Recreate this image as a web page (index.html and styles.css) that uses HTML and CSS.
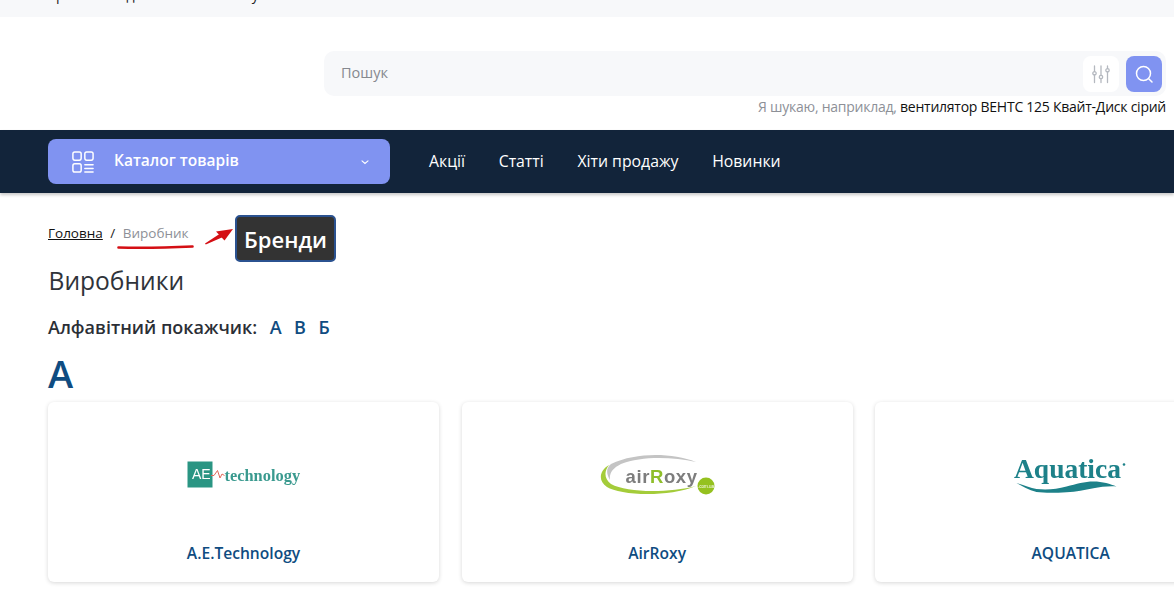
FILE: index.html
```html
<!DOCTYPE html>
<html lang="uk">
<head>
<meta charset="utf-8">
<title>Виробники</title>
<link rel="stylesheet" href="styles.css">
</head>
<body>
<div class="topbar">
  <div class="topbar-inner">
    <span class="top-a">р</span><span class="top-b">д</span><span class="top-c">у</span>
  </div>
</div>
<header class="header">
  <div class="search-col">
    <div class="search">
      <span class="search-label">Пошук</span>
      <span class="icon-btn icon-btn-light">
        <svg width="20" height="20" viewBox="0 0 20 20" fill="none" stroke="#b4b8bf" stroke-width="1.3" stroke-linecap="round">
          <path d="M3.5 2v5.600M3.5 11v7.500M10 2v9.300M10 14.700v3.800M16.500 2v2.600M16.500 8v10.500"/>
          <circle cx="3.500" cy="9.300" r="1.700"/><circle cx="10" cy="13" r="1.700"/><circle cx="16.500" cy="6.300" r="1.700"/>
        </svg>
      </span>
      <span class="icon-btn icon-btn-blue">
        <svg width="20" height="20" viewBox="0 0 20 20" fill="none" stroke="#fff" stroke-width="1.500" stroke-linecap="round">
          <circle cx="9.500" cy="9.500" r="7"/><path d="M14.700 14.700l3.300 3.300"/>
        </svg>
      </span>
    </div>
    <p class="hint">Я шукаю, наприклад, <span class="hint-dark">вентилятор ВЕНТС 125 Квайт-Диск сірий</span></p>
  </div>
</header>
<nav class="nav">
  <div class="catalog">
    <svg class="catalog-icon" width="22" height="22" viewBox="0 0 24 24" fill="none" stroke="#fff" stroke-width="1.600" stroke-linecap="round">
      <rect x="1" y="1" width="9" height="9" rx="2"/><rect x="14" y="1" width="9" height="9" rx="2"/><rect x="1" y="14" width="9" height="9" rx="2"/>
      <path d="M14 15h9M14 19h9M14 23h9"/>
    </svg>
    <span class="catalog-label">Каталог товарів</span>
    <svg class="catalog-chevron" width="10" height="10" viewBox="0 0 10 10" fill="none" stroke="#fff" stroke-width="1.100" stroke-linecap="round"><path d="M2 3.800l3 2.700 3-2.700"/></svg>
  </div>
  <a class="nav-link">Акції</a>
  <a class="nav-link">Статті</a>
  <a class="nav-link">Хіти продажу</a>
  <a class="nav-link">Новинки</a>
</nav>
<main class="main">
  <div class="crumbs">
    <a class="crumb-link">Головна</a><span class="crumb-sep">/</span><span class="crumb-current">Виробник</span>
    <span class="brand-note">Бренди</span>
    <svg class="annotation" width="130" height="32" viewBox="0 0 130 32" fill="none">
      <path d="M1.500 26.500C25 27 52 26.500 75.500 25.500" stroke="#d40f14" stroke-width="2.600" stroke-linecap="round"/>
      <path d="M88 22.500L88.800 23.500L106 16L104 12Z" fill="#d40f14"/>
      <path d="M116 8L99 10.500L107.500 19.500Z" fill="#d40f14"/>
    </svg>
  </div>
  <h1 class="title">Виробники</h1>
  <div class="alpha">
    <span class="alpha-label">Алфавітний покажчик:</span>
    <a class="alpha-link">А</a><a class="alpha-link">В</a><a class="alpha-link">Б</a>
  </div>
  <h2 class="letter">А</h2>
  <div class="cards">
    <article class="card">
      <div class="card-logo">
        <svg class="logo" width="120" height="36" viewBox="1 0 120 36">
          <rect x="4.500" y="4.500" width="25" height="26" fill="#2a9583"/>
          <text x="9" y="22" class="logo-ae">AE</text>
          <path d="M28 18.500h3l3.500-5 2.500 7.500 2-4 2.500 1.500" fill="none" stroke="#e0685a" stroke-width="1"/>
          <text x="41.500" y="24" class="logo-tech">technology</text>
        </svg>
      </div>
      <div class="card-name">A.E.Technology</div>
    </article>
    <article class="card">
      <div class="card-logo">
        <svg class="logo" width="120" height="44" viewBox="0 0 120 44">
          <path d="M99 9C75 0 40 -1 14 11C8 16 10 22 13 27C12 20 16 15 24 11C45 3 75 4 99 9Z" fill="#c4c4c4"/>
          <path d="M12 12C2 18 1 28 10 34C22 42 70 45 99 33C72 40 30 40 14 31C7 26 7 18 12 12Z" fill="#a4cc3a"/>
          <text x="28.500" y="29.500" class="logo-air">air<tspan class="logo-air-r">R</tspan>oxy</text>
          <circle cx="109" cy="33" r="8.500" fill="#95c11f"/>
          <text x="109" y="34.500" class="logo-dot">.com.ua</text>
        </svg>
      </div>
      <div class="card-name">AirRoxy</div>
    </article>
    <article class="card">
      <div class="card-logo">
        <svg class="logo" width="120" height="44" viewBox="0.500 -1 120 44">
          <text x="3.500" y="23.500" class="logo-aq">Aquatica</text>
          <circle cx="113.500" cy="10.500" r="1.300" fill="#1d8189"/>
          <path d="M6 29C14 31 20 34 26 35C38 36 46 35 56 32.500C66 30 74 27.500 83 27.500C92 27.500 100 30 106 32.500C98 32 90 33 83 34.200C74 36 66 38 56 38.200C44 39 34 39 26 38C18 36 12 32 6 29Z" fill="#1d8189"/>
        </svg>
      </div>
      <div class="card-name">AQUATICA</div>
    </article>
  </div>
</main>
</body>
</html>
```

FILE: styles.css
```css
* { box-sizing: border-box; }
html, body { margin: 0; padding: 0; height: 589px; overflow: hidden; background: #fff; }
body { font-family: "Open Sans", "Liberation Sans", sans-serif; color: #2b2f36; }

.topbar { height: 17px; background: #f7f8fa; overflow: hidden; }
.topbar-inner { display: flex; margin-top: -15px; font-size: 14px; line-height: 19px; color: #222; }
.top-a { margin-left: 56px; }
.top-b { margin-left: 62px; }
.top-c { margin-left: 117px; }

.header { height: 113px; padding: 34px 8px 0 324px; }
.search-col { display: flex; flex-direction: column; align-items: stretch; }
.search { display: flex; align-items: center; gap: 7px; height: 45px; padding: 0 4px 0 17px; background: #f7f8fa; border-radius: 10px; }
.search-label { flex: 1; font-size: 14.500px; line-height: 20px; padding-bottom: 2px; color: #86898f; }
.icon-btn { width: 36px; height: 36px; border-radius: 8px; display: flex; align-items: center; justify-content: center; }
.icon-btn-light { background: #fff; }
.icon-btn-blue { background: #8093f1; }
.hint { margin: 1px 0 0; text-align: right; font-size: 14px; line-height: 19px; color: #8d9097; letter-spacing: -0.25px; white-space: nowrap; }
.hint-dark { color: #111; }

.nav { height: 63px; background: #12243a; display: flex; align-items: center; gap: 33.700px; padding: 0 48px; box-shadow: 0 2px 3px rgba(0, 0, 0, 0.22); position: relative; }
.catalog { width: 342px; height: 45px; margin-right: 5.300px; background: #8093f1; border-radius: 8px; display: flex; align-items: center; padding: 0 20px 0 24px; color: #fff; }
.catalog-icon { flex: none; }
.catalog-label { flex: 1; margin-left: 20px; padding-bottom: 3px; font-size: 15.500px; line-height: 20px; font-weight: 600; }
.catalog-chevron { flex: none; }
.nav-link { font-size: 15.800px; line-height: 22px; padding-bottom: 2px; color: #fff; white-space: nowrap; }

.main { padding: 22px 0 0 48px; }
.crumbs { position: relative; height: 47px; display: flex; align-items: flex-start; font-size: 13.500px; line-height: 19px; padding-top: 9px; }
.crumb-link { color: #111; text-decoration: underline; }
.crumb-sep { margin: 0 7.500px; color: #222; }
.crumb-current { color: #8d9097; }
.brand-note { position: absolute; left: 187px; top: 0; width: 101px; height: 47px; padding-top: 1px; display: flex; align-items: center; justify-content: center; background: #333; border: 2px solid #2b5290; border-radius: 5px; color: #fff; font-size: 22px; font-weight: 600; }
.annotation { position: absolute; left: 69px; top: 6px; }

.title { margin: 2px 0 0 0.5px; font-size: 24.600px; line-height: 33px; font-weight: 400; color: #2f333a; }
.alpha { display: flex; align-items: center; margin-top: 18px; height: 24px; font-size: 18px; font-weight: 600; }
.alpha-label { margin-right: 12.500px; color: #2b2f36; }
.alpha-link { color: #0f4c81; margin-right: 12.500px; }
.letter { margin: 11px 0 0; font-size: 38px; line-height: 46px; font-weight: 600; color: #0f4c81; }

.cards { display: flex; gap: 22.600px; width: 1300px; margin-top: 6px; }
.card { flex: none; width: 391px; height: 180px; background: #fff; border-radius: 6px; box-shadow: 0 1px 4px rgba(0, 0, 0, 0.16); display: flex; flex-direction: column; align-items: center; }
.card-logo { height: 140px; width: 100%; display: flex; align-items: center; justify-content: center; }
.logo { filter: blur(0.35px); display: block; margin-top: 5px; }
.card-name { font-size: 15.600px; line-height: 22px; font-weight: 600; color: #0f4c81; }

.logo-ae { font-family: "Liberation Sans", sans-serif; font-size: 14px; fill: #fff; }
.logo-tech { font-family: "Liberation Serif", serif; font-size: 16.400px; font-weight: 700; fill: #3a9a8f; }
.logo-air { font-family: "Liberation Sans", sans-serif; font-size: 18.500px; font-weight: 700; fill: #7d7d7d; letter-spacing: 0.6px; }
.logo-air-r { fill: #8fbe2a; }
.logo-dot { font-family: "Liberation Sans", sans-serif; font-size: 4.500px; fill: #fff; text-anchor: middle; }
.logo-aq { font-family: "Liberation Serif", serif; font-size: 27.500px; font-weight: 700; fill: #1d8189; }
```
